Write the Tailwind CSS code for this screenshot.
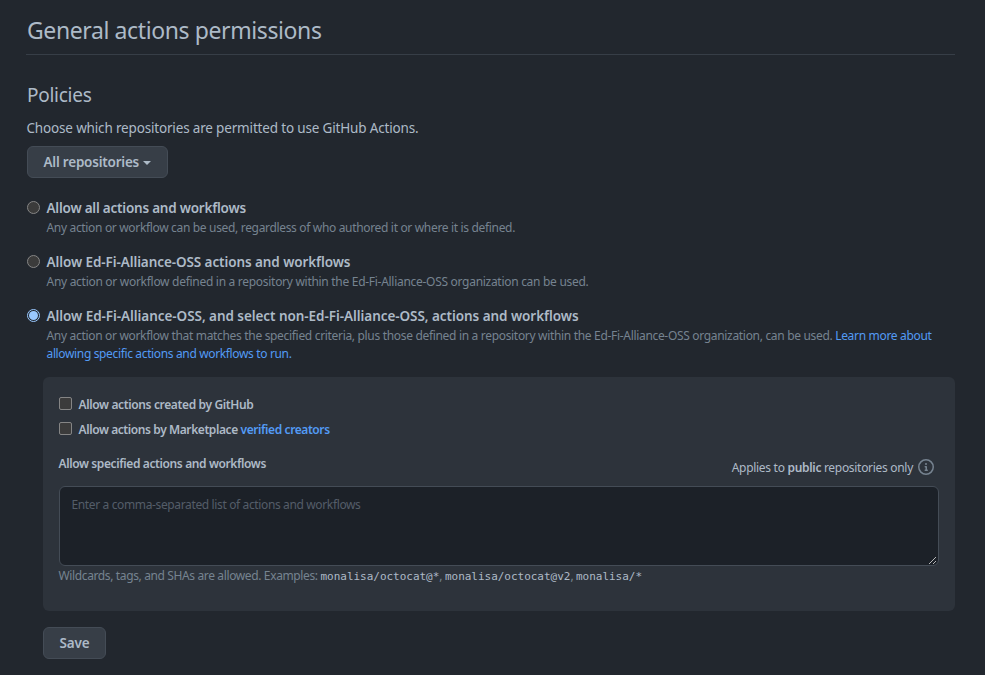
<!DOCTYPE html>
<html lang="en">
<head>
<meta charset="utf-8">
<title>General actions permissions</title>
<script src="https://cdn.jsdelivr.net/npm/@tailwindcss/browser@4"></script>
</head>
<body class="h-[675px] overflow-hidden bg-[#22272e] pt-[11px] pr-[30px] pl-[27px] font-['Noto_Sans','Open_Sans',sans-serif] text-[13.5px] leading-[21px] text-[#adbac7]">
<main>
  <h1 class="-ml-px h-11 border-b border-[#373e47] pl-px text-[23px] leading-[38px] tracking-[-0.397px]">General actions permissions</h1>
  <h2 class="mt-[25px] text-[19px] leading-[30px] tracking-[-0.26px]">Policies</h2>
  <p class="-ml-[0.5px] mt-2 tracking-[-0.166px]">Choose which repositories are permitted to use GitHub Actions.</p>
  <button class="mt-[7px] flex h-8 w-[141px] items-center rounded-md border border-[#444c56] bg-[#373e47] pl-[15.5px] font-semibold tracking-[-0.22px]">
    All repositories
    <span class="ml-1 mt-px h-0 w-0 border-x-4 border-t-4 border-x-transparent border-t-[#adbac7]"></span>
  </button>

  <div class="mt-5 flex flex-col gap-[15px]">
    <label class="flex gap-[6.5px]">
      <span class="mt-[3px] size-[13px] shrink-0 rounded-full border border-[#858585] bg-[#3b3b3b]"></span>
      <span class="block">
        <span class="block font-semibold tracking-[-0.22px]">Allow all actions and workflows</span>
        <span class="block text-xs leading-[18px] tracking-[-0.331px] text-[#768390]">Any action or workflow can be used, regardless of who authored it or where it is defined.</span>
      </span>
    </label>
    <label class="flex gap-[6.5px]">
      <span class="mt-[3px] size-[13px] shrink-0 rounded-full border border-[#858585] bg-[#3b3b3b]"></span>
      <span class="block">
        <span class="block font-semibold tracking-[-0.085px]">Allow Ed-Fi-Alliance-OSS actions and workflows</span>
        <span class="block text-xs leading-[18px] tracking-[-0.289px] text-[#768390]">Any action or workflow defined in a repository within the Ed-Fi-Alliance-OSS organization can be used.</span>
      </span>
    </label>
    <label class="flex gap-[6.5px]">
      <span class="mt-[3px] flex size-[13px] shrink-0 items-center justify-center rounded-full border border-[#99c8ff] bg-[#22272e]"><span class="size-[9px] rounded-full bg-[#99c8ff]"></span></span>
      <span class="block">
        <span class="block font-semibold tracking-[-0.055px]">Allow Ed-Fi-Alliance-OSS, and select non-Ed-Fi-Alliance-OSS, actions and workflows</span>
        <span class="block whitespace-nowrap text-xs leading-[18px] tracking-[-0.319px] text-[#768390]">Any action or workflow that matches the specified criteria, plus those defined in a repository within the Ed-Fi-Alliance-OSS organization, can be used. <a class="text-[#539bf5]">Learn more about<br><span class="tracking-[-0.355px]">allowing specific actions and workflows to run.</span></a></span>
      </span>
    </label>
  </div>

  <section class="mt-[14px] ml-4 h-[234px] rounded-md bg-[#2d333b] px-4 pt-[19px] text-xs leading-[18px]">
    <label class="flex gap-[6.5px] font-semibold tracking-[-0.363px]">
      <span class="mt-px size-[13px] shrink-0 rounded-[2px] border border-[#858585] bg-[#3b3b3b]"></span>
      Allow actions created by GitHub
    </label>
    <label class="mt-[7px] flex gap-[6.5px] font-semibold tracking-[-0.41px]">
      <span class="mt-px size-[13px] shrink-0 rounded-[2px] border border-[#858585] bg-[#3b3b3b]"></span>
      <span>Allow actions by Marketplace <a class="text-[#539bf5]">verified creators</a></span>
    </label>
    <div class="mt-4 flex h-[31px] justify-between">
      <span class="-ml-[0.5px] font-semibold tracking-[-0.385px]">Allow specified actions and workflows</span>
      <span class="mr-[5px] flex gap-[5px] pt-1">
        <span class="tracking-[-0.3px]">Applies to <b class="font-semibold">public</b> repositories only</span>
        <svg class="size-4" viewBox="0 0 16 16" fill="#768390"><path d="M8 1.5a6.5 6.5 0 1 0 0 13 6.5 6.5 0 0 0 0-13ZM0 8a8 8 0 1 1 16 0A8 8 0 0 1 0 8Zm6.5-.25A.75.75 0 0 1 7.25 7h1a.75.75 0 0 1 .75.75v2.75h.25a.75.75 0 0 1 0 1.5h-2a.75.75 0 0 1 0-1.5h.25v-2h-.25a.75.75 0 0 1-.75-.75ZM8 6a1 1 0 1 1 0-2 1 1 0 0 1 0 2Z"/></svg>
      </span>
    </div>
    <div class="flex h-20 justify-between rounded-md border border-[#444c56] bg-[#1c2128] pt-[9px] pl-[11.5px] tracking-[-0.365px] text-[#545d68]">
      Enter a comma-separated list of actions and workflows
      <svg class="mr-px size-[9px] self-end" viewBox="0 0 9 9" fill="none" stroke="#c8c8c8" stroke-width="0.9"><path d="M1 8 8 1M5 8l3-3"/></svg>
    </div>
    <p class="-ml-[0.5px] mt-px whitespace-nowrap tracking-[-0.37px] text-[#768390]">Wildcards, tags, and SHAs are allowed. Examples: <code class="font-['DejaVu_Sans_Mono',monospace] text-[11px] tracking-[-0.02px] text-[#adbac7]">monalisa/octocat@*</code>, <code class="font-['DejaVu_Sans_Mono',monospace] text-[11px] tracking-[-0.02px] text-[#adbac7]">monalisa/octocat@v2</code>, <code class="font-['DejaVu_Sans_Mono',monospace] text-[11px] tracking-[-0.02px] text-[#adbac7]">monalisa/*</code></p>
  </section>

  <button class="mt-4 ml-4 flex h-8 w-[63px] items-center justify-center rounded-md border border-[#444c56] bg-[#373e47] font-semibold tracking-[-0.1px]">Save</button>
</main>
</body>
</html>
